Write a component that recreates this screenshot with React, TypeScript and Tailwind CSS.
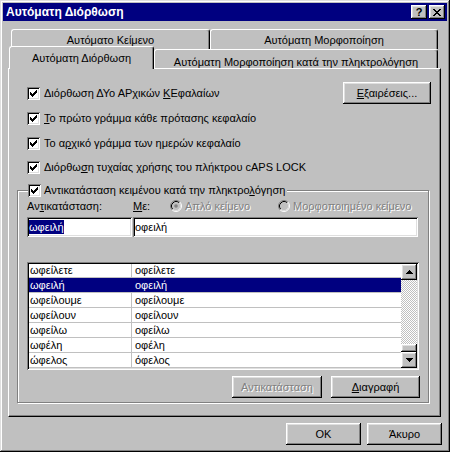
import React from "react";

const raised =
  "bg-[#c0c0c0] shadow-[inset_-1px_-1px_0_#000,inset_1px_1px_0_#fff,inset_-2px_-2px_0_#808080,inset_2px_2px_0_#dfdfdf]";
const sunken =
  "shadow-[inset_1px_1px_0_#808080,inset_-1px_-1px_0_#fff,inset_2px_2px_0_#000,inset_-2px_-2px_0_#dfdfdf]";
const disabledText = "text-[#808080] [text-shadow:1px_1px_0_#fff]";

const rows: [string, string][] = [
  ["ωφείλετε", "οφείλετε"],
  ["ωφειλή", "οφειλή"],
  ["ωφείλουμε", "οφείλουμε"],
  ["ωφείλουν", "οφείλουν"],
  ["ωφείλω", "οφείλω"],
  ["ωφέλη", "οφέλη"],
  ["ώφελος", "όφελος"],
];

function Check() {
  return (
    <span className={`flex h-[13px] w-[13px] shrink-0 items-center justify-center bg-white ${sunken}`}>
      <svg width="7" height="7" viewBox="0 0 7 7" shapeRendering="crispEdges">
        <path
          d="M6 0h1v1h-1zM5 1h2v1h-2zM0 2h1v1h-1zM4 2h3v1h-3zM0 3h2v1h-2zM3 3h3v1h-3zM0 4h5v1h-5zM1 5h3v1h-3zM2 6h1v1h-1z"
          fill="#000"
        />
      </svg>
    </span>
  );
}

function Radio({ on }: { on?: boolean }) {
  return (
    <svg width="12" height="12" viewBox="0 0 12 12" className="shrink-0">
      <circle cx="6" cy="6" r="4.5" fill="#c0c0c0" />
      <path d="M2.1 9.9A5.5 5.5 0 0 1 9.9 2.1" stroke="#808080" fill="none" />
      <path d="M9.9 2.1A5.5 5.5 0 0 1 2.1 9.9" stroke="#fff" fill="none" />
      <path d="M2.82 9.18A4.5 4.5 0 0 1 9.18 2.82" stroke="#000" fill="none" />
      <path d="M9.18 2.82A4.5 4.5 0 0 1 2.82 9.18" stroke="#dfdfdf" fill="none" />
      {on && <circle cx="6" cy="6" r="1.8" fill="#808080" />}
    </svg>
  );
}

function Arrow({ down }: { down?: boolean }) {
  return (
    <svg width="7" height="4" viewBox="0 0 7 4" shapeRendering="crispEdges">
      <path
        d={down ? "M0 0h7v1H0zM1 1h5v1H1zM2 2h3v1H2zM3 3h1v1H3z" : "M3 0h1v1H3zM2 1h3v1H2zM1 2h5v1H1zM0 3h7v1H0z"}
        fill="#000"
      />
    </svg>
  );
}

function Tab({ label, w, active, h, pt }: { label: string; w: string; active?: boolean; h: string; pt: string }) {
  return (
    <div
      className={`${w} ${h} ${pt} ${active ? "relative z-10" : ""} shrink-0 rounded-t-[3px] border-l border-t border-r border-white border-r-black bg-[#c0c0c0] text-center leading-[13px] shadow-[inset_-1px_0_0_#808080]`}
    >
      {label}
    </div>
  );
}

export default function App() {
  return (
    <div className="h-[452px] w-[450px] bg-[#c0c0c0] p-[3px] text-[11px] text-black [font-family:'Liberation_Sans',Arial,sans-serif] shadow-[inset_-1px_-1px_0_#000,inset_1px_1px_0_#dfdfdf,inset_-2px_-2px_0_#808080,inset_2px_2px_0_#fff]">
      {/* title bar */}
      <div className="flex h-[18px] items-center bg-[#000080] pl-[3px] pr-[2px]">
        <span className="flex-1 text-[12px] font-bold text-white">Αυτόματη Διόρθωση</span>
        <div className="flex gap-[2px]">
          <span className={`flex h-[14px] w-[16px] items-center justify-center text-[11px] font-bold leading-none ${raised}`}>?</span>
          <span className={`flex h-[14px] w-[16px] items-center justify-center ${raised}`}>
            <svg width="8" height="7" viewBox="0 0 8 7" shapeRendering="crispEdges">
              <path
                d="M0 0h2v1H0zM6 0h2v1H6zM1 1h2v1H1zM5 1h2v1H5zM2 2h4v1H2zM3 3h2v1H3zM2 4h4v1H2zM1 5h2v1H1zM5 5h2v1H5zM0 6h2v1H0zM6 6h2v1H6z"
                fill="#000"
              />
            </svg>
          </span>
        </div>
      </div>

      {/* tabs */}
      <div className="ml-[5px] mt-[8px]">
        <div className="ml-[3px] flex h-[20px]">
          <Tab label="Αυτόματο Κείμενο" w="w-[199px]" h="h-[20px]" pt="pt-[4px]" />
          <Tab label="Αυτόματη Μορφοποίηση" w="w-[228px]" h="h-[20px]" pt="pt-[4px]" />
        </div>
        <div className="flex h-[20px] items-end">
          <Tab label="Αυτόματη Διόρθωση" w="ml-[1px] w-[145px]" h="h-[23px]" pt="pt-[5px]" active />
          <Tab label="Αυτόματη Μορφοποίηση κατά την πληκτρολόγηση" w="w-[284px]" h="h-[20px]" pt="pt-[6px]" />
        </div>

        {/* panel */}
        <div className="relative -mt-[1px] flex h-[349px] w-[433px] flex-col border-b border-l border-r border-t border-white border-b-black border-r-black pt-[13px] shadow-[inset_-1px_-1px_0_#808080]">
          <div className="ml-[18px] mr-[9px] flex h-[22px] items-center justify-between">
            <div className="flex items-center gap-[4px] leading-[13px]">
              <Check />
              <span>
                Διόρθωση ΔΥο ΑΡχικών <span className="underline">Κ</span>Εφαλαίων
              </span>
            </div>
            <button className={`h-[22px] w-[88px] leading-[13px] ${raised}`}>
              <span className="underline">Ε</span>ξαιρέσεις...
            </button>
          </div>
          <div className="ml-[18px] mt-[8px] flex h-[13px] items-center gap-[4px] leading-[13px]">
            <Check />
            <span>
              <span className="underline">Τ</span>ο πρώτο γράμμα κάθε πρότασης κεφαλαίο
            </span>
          </div>
          <div className="ml-[18px] mt-[12px] flex h-[13px] items-center gap-[4px] leading-[13px]">
            <Check />
            <span>
              Το α<span className="underline">ρ</span>χικό γράμμα των ημερών κεφαλαίο
            </span>
          </div>
          <div className="ml-[18px] mt-[11px] flex h-[13px] items-center gap-[4px] leading-[13px]">
            <Check />
            <span>
              Διόρθω<span className="underline">σ</span>η τυχαίας χρήσης του πλήκτρου cAPS LOCK
            </span>
          </div>

          {/* group box */}
          <div className="ml-[8px] mt-[16px] flex h-[213px] w-[412px] flex-col border border-[#808080] shadow-[inset_1px_1px_0_#fff,1px_1px_0_#fff]">
            <div className="-mt-[7px] ml-[10px] flex h-[13px] w-fit items-center gap-[3px] bg-[#c0c0c0] pr-[2px] leading-[13px]">
              <Check />
              <span>
                Αντικατάσταση κειμένου κατά την πληκτρο<span className="underline">λ</span>όγηση
              </span>
            </div>

            <div className="ml-[9px] mt-[2px] flex h-[14px] items-center leading-[13px]">
              <span className="w-[106px]">
                Αν<span className="underline">τ</span>ικατάσταση:
              </span>
              <span className="w-[37px]">
                <span className="underline">Μ</span>ε:
              </span>
              <div className="flex w-[108px] items-center gap-[3px]">
                <Radio on />
                <span className={disabledText}>Απλό κείμενο</span>
              </div>
              <div className="flex items-center gap-[3px]">
                <Radio />
                <span className={disabledText}>Μορφοποιημένο κείμενο</span>
              </div>
            </div>

            <div className="ml-[9px] mt-[4px] flex gap-[1px]">
              <div className={`flex h-[20px] w-[105px] items-center bg-white p-[2px] ${sunken}`}>
                <span className="bg-[#000080] leading-[14px] text-white">ωφειλή</span>
              </div>
              <div className={`flex h-[20px] w-[285px] items-center bg-white p-[2px] ${sunken}`}>
                <span className="leading-[14px]">οφειλή</span>
              </div>
            </div>

            {/* list */}
            <div className={`ml-[9px] mt-[25px] flex h-[108px] w-[392px] bg-white p-[2px] ${sunken}`}>
              <div className="flex-1 overflow-hidden">
                <div className="-mt-[1px]">
                  {rows.map(([a, b], i) => {
                    const sel = i === 1;
                    return (
                      <div
                        key={a}
                        className={`flex h-[15px] border-b border-[#c0c0c0] leading-[14px] ${sel ? "bg-[#000080] text-white" : ""}`}
                      >
                        <span className={`w-[103px] border-r pl-[1px] ${sel ? "border-[#000080]" : "border-[#c0c0c0]"}`}>{a}</span>
                        <span className="pl-[3px]">{b}</span>
                      </div>
                    );
                  })}
                </div>
              </div>
              <div className="flex w-[16px] flex-col">
                <span className={`flex h-[16px] items-center justify-center ${raised}`}>
                  <Arrow />
                </span>
                <span className="flex-1 bg-[repeating-conic-gradient(#c0c0c0_0_25%,#fff_0_50%)] bg-[length:2px_2px]" />
                <span className={`h-[8px] ${raised}`} />
                <span className={`flex h-[16px] items-center justify-center ${raised}`}>
                  <Arrow down />
                </span>
              </div>
            </div>

            <div className="mt-[6px] flex justify-end gap-[9px] pr-[8px]">
              <button className={`h-[22px] w-[90px] leading-[13px] ${raised} ${disabledText}`}>Αντικατάσταση</button>
              <button className={`h-[22px] w-[89px] leading-[13px] ${raised}`}>
                <span className="underline">Δ</span>ιαγραφή
              </button>
            </div>
          </div>
        </div>
      </div>

      {/* dialog buttons */}
      <div className="ml-[283px] mt-[6px] flex gap-[6px]">
        <button className={`h-[22px] w-[75px] leading-[13px] ${raised}`}>OK</button>
        <button className={`h-[22px] w-[75px] leading-[13px] ${raised}`}>Άκυρο</button>
      </div>
    </div>
  );
}
